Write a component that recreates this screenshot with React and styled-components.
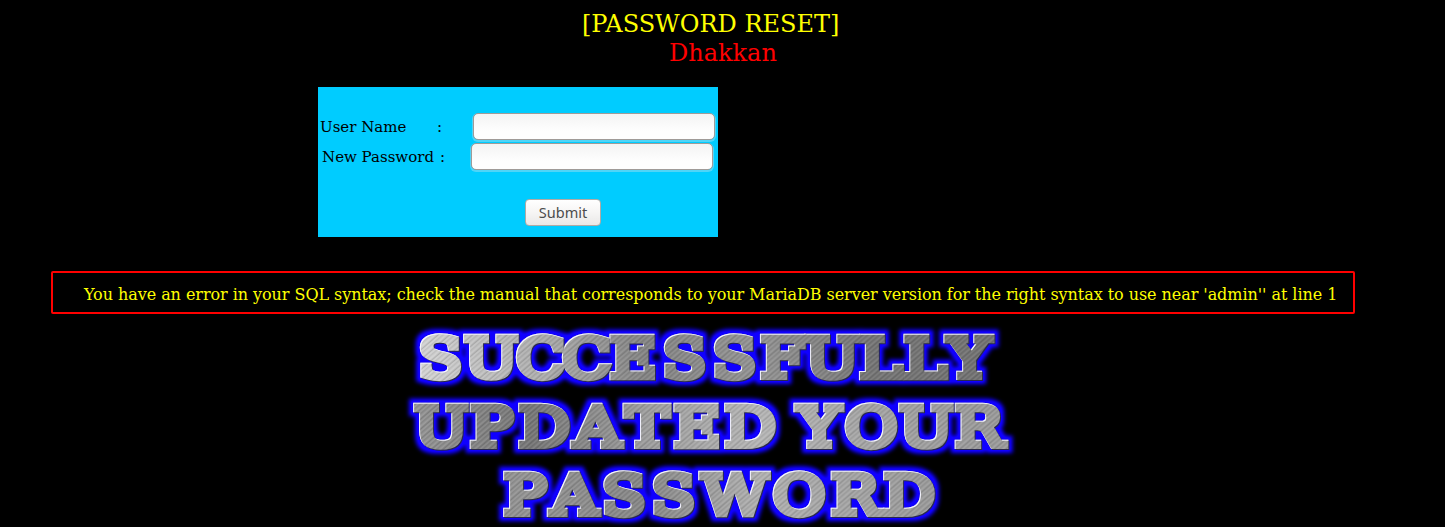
import React from "react";
import styled, { createGlobalStyle } from "styled-components";

const GlobalStyle = createGlobalStyle`
  body {
    margin: 0;
    background: #000;
    overflow: hidden;
    font-family: "DejaVu Serif", serif;
  }
`;

const Page = styled.main`
  width: 1445px;
  height: 527px;
  overflow: hidden;
  display: flex;
  flex-direction: column;
`;

const Heading = styled.header`
  display: flex;
  flex-direction: column;
  flex: none;
  padding: 10px 0 0 582px;
  height: 87px;
  box-sizing: border-box;
  font-size: 24px;
  line-height: 29px;
  white-space: pre;
`;

const Title = styled.div`
  color: #ff0;
`;

const Author = styled.div`
  color: #f00;
  padding-left: 87px;
`;

const Panel = styled.form`
  box-sizing: border-box;
  flex: none;
  width: 400px;
  height: 150px;
  margin-left: 318px;
  padding-top: 26px;
  background: #0cf;
`;

const Field = styled.label`
  display: flex;
  align-items: center;
  height: 28px;
  margin-bottom: 2px;
  padding-left: ${(p) => p.$indent}px;
  font-size: 15px;
  color: #000;
`;

const Caption = styled.span`
  width: ${(p) => p.$width}px;
  white-space: pre;
`;

const Colon = styled.span`
  width: ${(p) => p.$width}px;
`;

const Input = styled.input`
  box-sizing: border-box;
  width: 242px;
  height: 27px;
  margin: 0 0 1px;
  padding: 0 6px;
  border: 1px solid #a09b98;
  border-radius: 5px;
  outline: none;
  background: linear-gradient(#f4f4f4, #fefefe 70%);
  box-shadow: 0 1px 0 1px rgba(200, 225, 235, 0.4);
`;

const Submit = styled.button`
  display: block;
  box-sizing: border-box;
  width: 76px;
  height: 27px;
  margin: 28px 0 0 207px;
  padding: 0;
  border: 1px solid #b0aaa5;
  border-radius: 4px;
  background: linear-gradient(#fff, #f6f5f4 50%, #e9e8e7);
  color: #4c4c4c;
  font: 14.5px/25px "Noto Sans", sans-serif;
`;

const ErrorBox = styled.div`
  box-sizing: border-box;
  flex: none;
  width: 1304px;
  height: 43px;
  margin: 34px 0 0 51px;
  padding: 2px 0 0 31px;
  border: 2px solid #f00;
  border-radius: 2px;
  color: #ff0;
  font-size: 16px;
  letter-spacing: -0.055px;
  line-height: 39px;
  white-space: nowrap;
`;

const Banner = styled.svg`
  display: block;
  flex: none;
  width: 620px;
  height: 213px;
  margin-left: 400px;
  font: 55px "DejaVu Serif", serif;
  text-anchor: middle;
`;

const STRETCH = 1.16;

const LINES = [
  {
    text: "SUCCESSFULLY",
    x: [40, 91, 140.5, 186.5, 233, 284, 334, 382.5, 432, 480.5, 525, 569],
    y: 62.6,
    metal: ["#d4d4d4", "#b0b0b0", "#828282", "#929292", "#727272", "#707070"],
  },
  {
    text: "UPDATED YOUR",
    x: [41, 91.5, 144, 197, 247, 297, 350, 392, 419, 471, 526, 579],
    y: 131.6,
    metal: ["#929292", "#747474", "#9c9c9c", "#b5b5b5", "#a3a3a3", "#999"],
  },
  {
    text: "PASSWORD",
    x: [125, 174, 223.5, 273, 334.5, 399, 455, 509],
    y: 200.2,
    metal: ["#888", "#929292", "#858585", "#b0b0b0", "#a0a0a0", "#919191"],
  },
];

function MetalBanner() {
  return (
    <Banner viewBox="0 0 620 213" role="img">
      <defs>
        <pattern id="brush" width="7" height="7" patternUnits="userSpaceOnUse" patternTransform="rotate(45)">
          <rect x="0.5" width="1" height="7" fill="#fff" opacity=".16" />
          <rect x="2.4" width="1" height="7" fill="#222" opacity=".2" />
          <rect x="4" width="1" height="7" fill="#fff" opacity=".12" />
          <rect x="5.6" width="0.8" height="7" fill="#222" opacity=".14" />
        </pattern>
        <filter id="metal" x="-5%" y="-30%" width="110%" height="160%" colorInterpolationFilters="sRGB">
          <feMorphology in="SourceAlpha" operator="dilate" radius="3.5" result="wide" />
          <feGaussianBlur in="wide" stdDeviation="1.9" result="soft" />
          <feComponentTransfer in="soft" result="halo">
            <feFuncA type="linear" slope="1.15" />
          </feComponentTransfer>
          <feFlood floodColor="#1000ff" />
          <feComposite in2="halo" operator="in" result="glow" />
          <feOffset in="SourceAlpha" dx="1" dy="1" result="low" />
          <feFlood floodColor="#29294d" />
          <feComposite in2="low" operator="in" result="shade" />
          <feOffset in="SourceAlpha" dx="1" dy="1" result="inner" />
          <feComposite in="SourceAlpha" in2="inner" operator="out" result="edge" />
          <feFlood floodColor="#f4f4ff" />
          <feComposite in2="edge" operator="in" result="light" />
          <feMerge>
            <feMergeNode in="glow" />
            <feMergeNode in="shade" />
            <feMergeNode in="SourceGraphic" />
            <feMergeNode in="light" />
          </feMerge>
        </filter>
        {LINES.map((line, i) => (
          <React.Fragment key={line.text}>
            <linearGradient id={`tone${i}`} gradientUnits="userSpaceOnUse" x1="15" y1={line.y} x2="505" y2={line.y - 46}>
              {line.metal.map((c, n) => (
                <stop key={n} offset={n / 5} stopColor={c} />
              ))}
            </linearGradient>
            <pattern id={`steel${i}`} width="620" height="219" patternUnits="userSpaceOnUse">
              <rect width="620" height="219" fill={`url(#tone${i})`} />
              <rect width="620" height="219" fill="url(#brush)" />
            </pattern>
          </React.Fragment>
        ))}
      </defs>
      {LINES.map((line, i) => (
        <g key={line.text} filter="url(#metal)">
          <text
            x={line.x.map((v) => (v / STRETCH).toFixed(2)).join(" ")}
            y={line.y}
            transform={`scale(${STRETCH} 1)`}
            fill={`url(#steel${i})`}
            stroke={`url(#steel${i})`}
            strokeWidth="6.6"
            strokeMiterlimit="2"
          >
            {line.text}
          </text>
        </g>
      ))}
    </Banner>
  );
}

export default function App() {
  return (
    <>
      <GlobalStyle />
      <Page>
        <Heading>
          <Title>[PASSWORD RESET]</Title>
          <Author>Dhakkan</Author>
        </Heading>
        <Panel onSubmit={(e) => e.preventDefault()}>
          <Field $indent={2}>
            <Caption $width={117}>User Name</Caption>
            <Colon $width={36}>:</Colon>
            <Input name="uname" />
          </Field>
          <Field $indent={4}>
            <Caption $width={118}>New Password</Caption>
            <Colon $width={31}>:</Colon>
            <Input name="passwd" />
          </Field>
          <Submit type="submit">Submit</Submit>
        </Panel>
        <ErrorBox>
          You have an error in your SQL syntax; check the manual that corresponds to your MariaDB server version for the
          right syntax to use near 'admin'' at line 1
        </ErrorBox>
        <MetalBanner />
      </Page>
    </>
  );
}
